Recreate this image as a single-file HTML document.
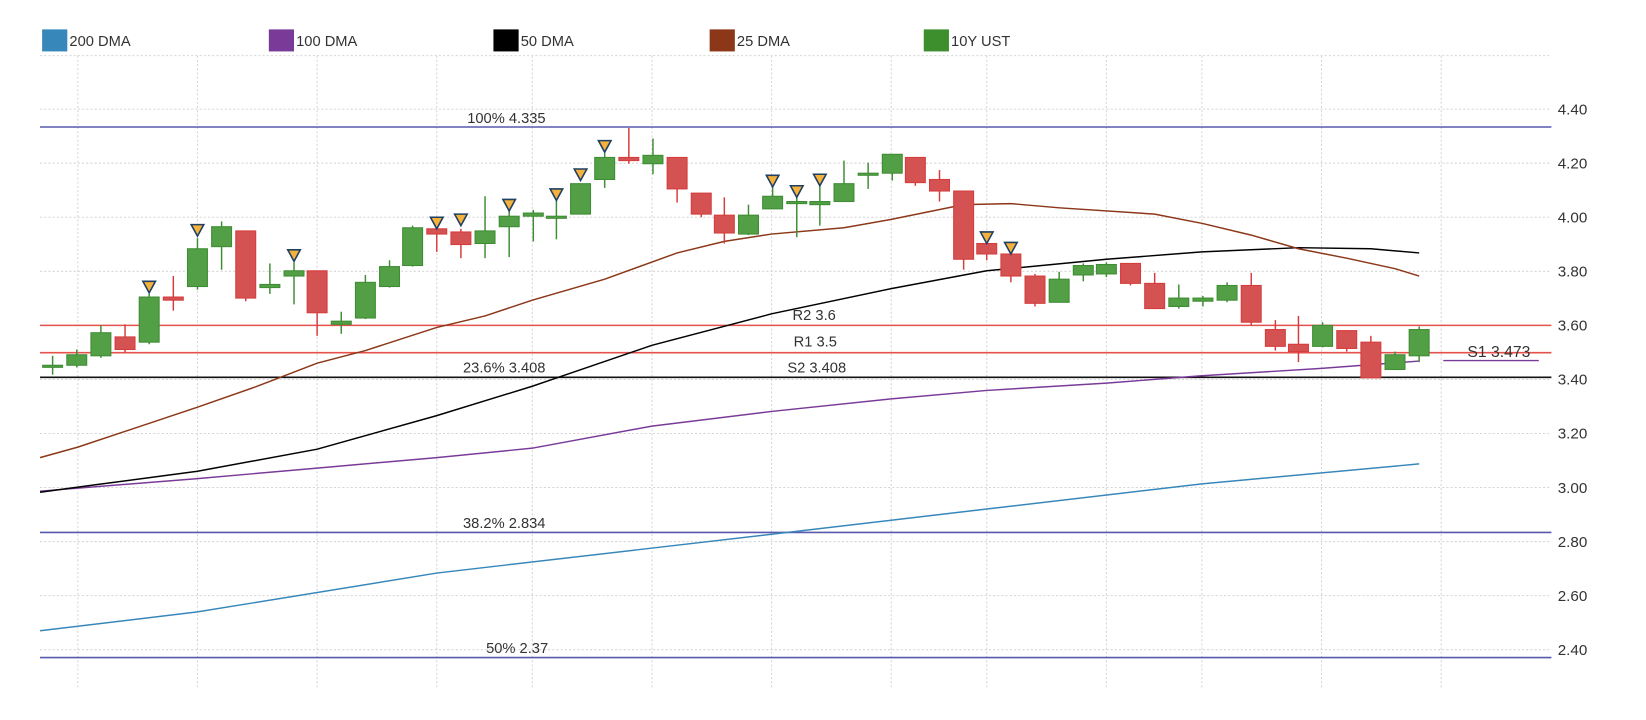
<!DOCTYPE html>
<html><head><meta charset="utf-8"><style>
html,body{margin:0;padding:0;background:#fff;}
svg{display:block;font-family:"Liberation Sans",sans-serif;}
.gd{stroke:#d6d6d6;stroke-width:1;stroke-dasharray:2 2;fill:none}
.g rect{fill:#529f46;stroke:#3e8c33;stroke-width:1}
.g line{stroke:#3e8c33;stroke-width:1.4}
.r rect{fill:#d45252;stroke:#d63c3c;stroke-width:1}
.r line{stroke:#d63c3c;stroke-width:1.4}
.t{fill:#f4b13c;stroke:#1f3f63;stroke-width:1.5}
.lbl{font-size:14px;fill:#333}
.ax{font-size:14.5px;fill:#333}
</style></head><body>
<svg width="1646" height="720" viewBox="0 0 1568 686" xmlns="http://www.w3.org/2000/svg">
<!-- legend -->
<rect x="40" y="28" width="24" height="21" fill="#3787bb"/><text x="66" y="44" class="lbl">200 DMA</text>
<rect x="256" y="28" width="24" height="21" fill="#7a3a98"/><text x="282" y="44" class="lbl">100 DMA</text>
<rect x="470" y="28" width="24" height="21" fill="#000"/><text x="496" y="44" class="lbl">50 DMA</text>
<rect x="676" y="28" width="24" height="21" fill="#8b3718"/><text x="702" y="44" class="lbl">25 DMA</text>
<rect x="880" y="28" width="24" height="21" fill="#3d8f2e"/><text x="906" y="44" class="lbl">10Y UST</text>
<line x1="38" y1="53" x2="1478" y2="53" class="gd"/>
<!-- vertical grid -->
<g class="gd">
<line x1="74" y1="53" x2="74" y2="655"/><line x1="188" y1="53" x2="188" y2="655"/><line x1="302" y1="53" x2="302" y2="655"/><line x1="416" y1="53" x2="416" y2="655"/><line x1="507" y1="53" x2="507" y2="655"/><line x1="621" y1="53" x2="621" y2="655"/><line x1="735" y1="53" x2="735" y2="655"/><line x1="849" y1="53" x2="849" y2="655"/><line x1="940" y1="53" x2="940" y2="655"/><line x1="1054" y1="53" x2="1054" y2="655"/><line x1="1145" y1="53" x2="1145" y2="655"/><line x1="1259" y1="53" x2="1259" y2="655"/><line x1="1373" y1="53" x2="1373" y2="655"/>
<line x1="38" y1="104" x2="1478" y2="104"/><line x1="38" y1="155.5" x2="1478" y2="155.5"/><line x1="38" y1="207" x2="1478" y2="207"/><line x1="38" y1="258.5" x2="1478" y2="258.5"/><line x1="38" y1="310" x2="1478" y2="310"/><line x1="38" y1="361.5" x2="1478" y2="361.5"/><line x1="38" y1="413" x2="1478" y2="413"/><line x1="38" y1="464.5" x2="1478" y2="464.5"/><line x1="38" y1="516" x2="1478" y2="516"/><line x1="38" y1="567.5" x2="1478" y2="567.5"/><line x1="38" y1="619" x2="1478" y2="619"/>
</g>
<!-- axis labels -->
<g class="ax">
<text x="1484" y="109">4.40</text><text x="1484" y="160.5">4.20</text><text x="1484" y="212">4.00</text><text x="1484" y="263.5">3.80</text><text x="1484" y="315">3.60</text><text x="1484" y="366.5">3.40</text><text x="1484" y="418">3.20</text><text x="1484" y="469.5">3.00</text><text x="1484" y="521">2.80</text><text x="1484" y="572.5">2.60</text><text x="1484" y="624">2.40</text>
</g>
<!-- level lines -->
<line x1="38" y1="121" x2="1478" y2="121" stroke="#5858ad" stroke-width="1.5"/>
<line x1="38" y1="310" x2="1478" y2="310" stroke="#e5514b" stroke-width="1.5"/>
<line x1="38" y1="336" x2="1478" y2="336" stroke="#e5514b" stroke-width="1.5"/>
<line x1="38" y1="359.5" x2="1478" y2="359.5" stroke="#111" stroke-width="1.5"/>
<line x1="38" y1="507.3" x2="1478" y2="507.3" stroke="#5858ad" stroke-width="1.5"/>
<line x1="38" y1="626.5" x2="1478" y2="626.5" stroke="#5858ad" stroke-width="1.5"/>
<line x1="1375" y1="343.5" x2="1466" y2="343.5" stroke="#7a3a98" stroke-width="1.3"/>
<g class="lbl">
<text x="445" y="117">100% 4.335</text>
<text x="755" y="305">R2 3.6</text>
<text x="756" y="330">R1 3.5</text>
<text x="441" y="355">23.6% 3.408</text>
<text x="750" y="355">S2 3.408</text>
<text x="441" y="503">38.2% 2.834</text>
<text x="463" y="622">50% 2.37</text>
<text x="1398" y="340" style="font-size:15px">S1 3.473</text>
</g>
<!-- MAs -->
<polyline fill="none" stroke="#3787bb" stroke-width="1.4" points="38,601 188,583 416,546 735,509 940,485 1145,461 1352,442"/>
<polyline fill="none" stroke="#7a3a98" stroke-width="1.4" points="38,468 188,456 302,446 416,436 507,427 621,406 735,392 849,380 940,372 1054,365 1145,358 1259,351 1352,344"/>
<polyline fill="none" stroke="#000" stroke-width="1.4" points="38,469 90,462 188,449 302,428 416,396 507,368 621,329 735,299 849,275 940,258 1054,247 1145,240 1237,236 1306,237 1352,241"/>
<polyline fill="none" stroke="#8b3718" stroke-width="1.4" points="38,436 74,426 188,388 245,368 302,346 348,334 416,312 462,301 507,286 576,266 645,241 690,230 735,223 804,217 849,209 918,195 963,194 1009,198 1100,204 1146,213 1192,224 1237,237 1283,246 1329,256 1352,263"/>
<!-- candles -->
<g class="g"><line x1="50" y1="339" x2="50" y2="357"/><rect x="40.5" y="348" width="19" height="2"/></g>
<g class="g"><line x1="73" y1="333" x2="73" y2="350"/><rect x="63.5" y="338" width="19" height="10"/></g>
<g class="g"><line x1="96" y1="310" x2="96" y2="341"/><rect x="86.5" y="317" width="19" height="22"/></g>
<g class="r"><line x1="119" y1="309" x2="119" y2="336"/><rect x="109.5" y="321" width="19" height="12"/></g>
<g class="g"><line x1="142" y1="280" x2="142" y2="328"/><rect x="132.5" y="283" width="19" height="43"/></g>
<g class="r"><line x1="165" y1="263" x2="165" y2="296"/><rect x="155.5" y="283" width="19" height="3"/></g>
<g class="g"><line x1="188" y1="227" x2="188" y2="276"/><rect x="178.5" y="237" width="19" height="36"/></g>
<g class="g"><line x1="211" y1="211" x2="211" y2="257"/><rect x="201.5" y="216" width="19" height="19"/></g>
<g class="r"><line x1="234" y1="220" x2="234" y2="287"/><rect x="224.5" y="220" width="19" height="64"/></g>
<g class="g"><line x1="257" y1="251" x2="257" y2="280"/><rect x="247.5" y="271" width="19" height="3"/></g>
<g class="g"><line x1="280" y1="250" x2="280" y2="290"/><rect x="270.5" y="258" width="19" height="5"/></g>
<g class="r"><line x1="302" y1="258" x2="302" y2="320"/><rect x="292.5" y="258" width="19" height="40"/></g>
<g class="g"><line x1="325" y1="297" x2="325" y2="318"/><rect x="315.5" y="306" width="19" height="3"/></g>
<g class="g"><line x1="348" y1="262" x2="348" y2="304"/><rect x="338.5" y="269" width="19" height="34"/></g>
<g class="g"><line x1="371" y1="248" x2="371" y2="274"/><rect x="361.5" y="254" width="19" height="19"/></g>
<g class="g"><line x1="393" y1="215" x2="393" y2="254"/><rect x="383.5" y="217" width="19" height="36"/></g>
<g class="r"><line x1="416" y1="215" x2="416" y2="240"/><rect x="406.5" y="218" width="19" height="5"/></g>
<g class="r"><line x1="439" y1="218" x2="439" y2="246"/><rect x="429.5" y="221" width="19" height="12"/></g>
<g class="g"><line x1="462" y1="187" x2="462" y2="246"/><rect x="452.5" y="220" width="19" height="12"/></g>
<g class="g"><line x1="485" y1="200" x2="485" y2="245"/><rect x="475.5" y="206" width="19" height="10"/></g>
<g class="g"><line x1="508" y1="200" x2="508" y2="230"/><rect x="498.5" y="203" width="19" height="3"/></g>
<g class="g"><line x1="530" y1="190" x2="530" y2="228"/><rect x="520.5" y="206" width="19" height="2"/></g>
<g class="g"><line x1="553" y1="175" x2="553" y2="204"/><rect x="543.5" y="175" width="19" height="29"/></g>
<g class="g"><line x1="576" y1="146" x2="576" y2="179"/><rect x="566.5" y="150" width="19" height="21"/></g>
<g class="r"><line x1="599" y1="122" x2="599" y2="156"/><rect x="589.5" y="150" width="19" height="3"/></g>
<g class="g"><line x1="622" y1="132" x2="622" y2="166"/><rect x="612.5" y="148" width="19" height="8"/></g>
<g class="r"><line x1="645" y1="150" x2="645" y2="193"/><rect x="635.5" y="150" width="19" height="30"/></g>
<g class="r"><line x1="668" y1="184" x2="668" y2="207"/><rect x="658.5" y="184" width="19" height="20"/></g>
<g class="r"><line x1="690" y1="188" x2="690" y2="232"/><rect x="680.5" y="205" width="19" height="17"/></g>
<g class="g"><line x1="713" y1="195" x2="713" y2="224"/><rect x="703.5" y="205" width="19" height="18"/></g>
<g class="g"><line x1="736" y1="178" x2="736" y2="199"/><rect x="726.5" y="187" width="19" height="12"/></g>
<g class="g"><line x1="759" y1="185" x2="759" y2="226"/><rect x="749.5" y="192" width="19" height="2"/></g>
<g class="g"><line x1="781" y1="176" x2="781" y2="215"/><rect x="771.5" y="192" width="19" height="3"/></g>
<g class="g"><line x1="804" y1="153" x2="804" y2="192"/><rect x="794.5" y="175" width="19" height="17"/></g>
<g class="g"><line x1="827" y1="155" x2="827" y2="180"/><rect x="817.5" y="165" width="19" height="2"/></g>
<g class="g"><line x1="850" y1="147" x2="850" y2="172"/><rect x="840.5" y="147" width="19" height="18"/></g>
<g class="r"><line x1="872" y1="150" x2="872" y2="177"/><rect x="862.5" y="150" width="19" height="24"/></g>
<g class="r"><line x1="895" y1="162" x2="895" y2="192"/><rect x="885.5" y="171" width="19" height="11"/></g>
<g class="r"><line x1="918" y1="182" x2="918" y2="257"/><rect x="908.5" y="182" width="19" height="65"/></g>
<g class="r"><line x1="940" y1="232" x2="940" y2="248"/><rect x="930.5" y="232" width="19" height="10"/></g>
<g class="r"><line x1="963" y1="242" x2="963" y2="269"/><rect x="953.5" y="242" width="19" height="21"/></g>
<g class="r"><line x1="986" y1="261" x2="986" y2="292"/><rect x="976.5" y="263" width="19" height="26"/></g>
<g class="g"><line x1="1009" y1="259" x2="1009" y2="288"/><rect x="999.5" y="266" width="19" height="22"/></g>
<g class="g"><line x1="1032" y1="251" x2="1032" y2="268"/><rect x="1022.5" y="253" width="19" height="9"/></g>
<g class="g"><line x1="1054" y1="250" x2="1054" y2="264"/><rect x="1044.5" y="252" width="19" height="9"/></g>
<g class="r"><line x1="1077" y1="251" x2="1077" y2="272"/><rect x="1067.5" y="251" width="19" height="19"/></g>
<g class="r"><line x1="1100" y1="260" x2="1100" y2="294"/><rect x="1090.5" y="270" width="19" height="24"/></g>
<g class="g"><line x1="1123" y1="271" x2="1123" y2="294"/><rect x="1113.5" y="284" width="19" height="8"/></g>
<g class="g"><line x1="1146" y1="282" x2="1146" y2="292"/><rect x="1136.5" y="284" width="19" height="3"/></g>
<g class="g"><line x1="1169" y1="269" x2="1169" y2="288"/><rect x="1159.5" y="272" width="19" height="14"/></g>
<g class="r"><line x1="1192" y1="260" x2="1192" y2="310"/><rect x="1182.5" y="272" width="19" height="35"/></g>
<g class="r"><line x1="1215" y1="305" x2="1215" y2="334"/><rect x="1205.5" y="314" width="19" height="16"/></g>
<g class="r"><line x1="1237" y1="301" x2="1237" y2="345"/><rect x="1227.5" y="328" width="19" height="7"/></g>
<g class="g"><line x1="1260" y1="307" x2="1260" y2="331"/><rect x="1250.5" y="310" width="19" height="20"/></g>
<g class="r"><line x1="1283" y1="315" x2="1283" y2="335"/><rect x="1273.5" y="315" width="19" height="17"/></g>
<g class="r"><line x1="1306" y1="320" x2="1306" y2="360"/><rect x="1296.5" y="326" width="19" height="34"/></g>
<g class="g"><line x1="1329" y1="335" x2="1329" y2="352"/><rect x="1319.5" y="338" width="19" height="14"/></g>
<g class="g"><line x1="1352" y1="311" x2="1352" y2="345"/><rect x="1342.5" y="314" width="19" height="25"/></g>
<!-- triangles -->
<g class="t">
<polygon points="136,268 148,268 142,279"/>
<polygon points="182,214 194,214 188,225"/>
<polygon points="274,238 286,238 280,249"/>
<polygon points="410,207 422,207 416,218"/>
<polygon points="433,204 445,204 439,215"/>
<polygon points="479,190 491,190 485,201"/>
<polygon points="524,180 536,180 530,191"/>
<polygon points="547,161 559,161 553,172"/>
<polygon points="570,134 582,134 576,145"/>
<polygon points="730,167 742,167 736,178"/>
<polygon points="753,177 765,177 759,188"/>
<polygon points="775,166 787,166 781,177"/>
<polygon points="934,221 946,221 940,232"/>
<polygon points="957,231 969,231 963,242"/>
</g>
</svg>
</body></html>
